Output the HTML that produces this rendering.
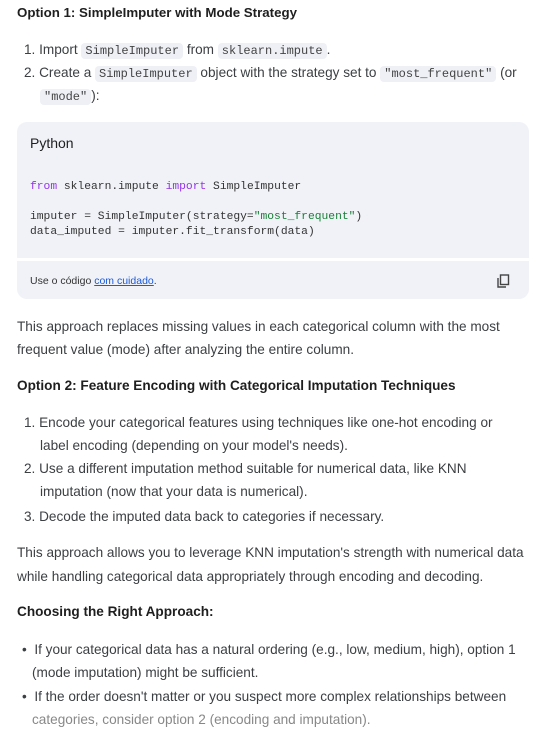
<!DOCTYPE html>
<html><head><style>
body{margin:0;width:535px;height:732px;background:#fff;font-family:"Liberation Sans",Arial,sans-serif;color:#1f1f1f;position:relative;overflow:hidden}
.l{position:absolute;left:17px;height:18px;line-height:18px;font-size:13.6px;white-space:nowrap;color:#3c4043}
.h{font-weight:bold;color:#1f1f1f}
code{font-family:"Liberation Mono",monospace;font-size:12px;background:#eef0f5;border-radius:4px;padding:1px 4px;color:#444}
.box{position:absolute;left:17px;width:512px;background:#f0f2f7}
.c{font-family:"Liberation Mono",monospace;font-size:11.3px;color:#333;position:absolute;left:30px;height:15px;line-height:15px;white-space:pre}
.k{color:#9334e6}.s{color:#188038}
</style></head><body>
<div class="l h" style="top:4px;font-size:13.3px">Option 1: SimpleImputer with Mode Strategy</div>
<div class="l" style="top:41px;left:24px">1. Import <code>SimpleImputer</code> from <code>sklearn.impute</code>.</div>
<div class="l" style="top:64px;left:24px">2. Create a <code>SimpleImputer</code> object with the strategy set to <code>"most_frequent"</code> (or</div>
<div class="l" style="top:87px;left:40px"><code>"mode"</code>):</div>
<div class="box" style="top:122px;height:136px;border-radius:10px 10px 0 0"></div>
<div class="box" style="top:261px;height:38px;border-radius:0 0 10px 10px"></div>
<div class="l" style="top:134px;left:30px;color:#1f1f1f;font-size:14px">Python</div>
<div class="c" style="top:180px"><span class="k">from</span> sklearn.impute <span class="k">import</span> SimpleImputer</div>
<div class="c" style="top:210px">imputer = SimpleImputer(strategy=<span class="s">"most_frequent"</span>)</div>
<div class="c" style="top:225px">data_imputed = imputer.fit_transform(data)</div>
<div class="l" style="top:272px;left:30px;font-size:10.5px;color:#333">Use o código <span style="color:#1a59d8;text-decoration:underline">com cuidado</span>.</div>
<svg style="position:absolute;left:497px;top:274px" width="13" height="14" viewBox="0 0 13 14"><rect x="3.5" y="1" width="8" height="9.5" fill="none" stroke="#444" stroke-width="1.4"/><path d="M1 4v9h8" fill="none" stroke="#444" stroke-width="1.4"/></svg>
<div class="l" style="top:318px">This approach replaces missing values in each categorical column with the most</div>
<div class="l" style="top:341px">frequent value (mode) after analyzing the entire column.</div>
<div class="l h" style="top:377px">Option 2: Feature Encoding with Categorical Imputation Techniques</div>
<div class="l" style="top:414px;left:24px">1. Encode your categorical features using techniques like one-hot encoding or</div>
<div class="l" style="top:437px;left:40px">label encoding (depending on your model's needs).</div>
<div class="l" style="top:460px;left:24px">2. Use a different imputation method suitable for numerical data, like KNN</div>
<div class="l" style="top:483px;left:40px">imputation (now that your data is numerical).</div>
<div class="l" style="top:508px;left:24px">3. Decode the imputed data back to categories if necessary.</div>
<div class="l" style="top:544px">This approach allows you to leverage KNN imputation's strength with numerical data</div>
<div class="l" style="top:568px">while handling categorical data appropriately through encoding and decoding.</div>
<div class="l h" style="top:603px">Choosing the Right Approach:</div>
<div class="l" style="top:641px;left:22px">•&nbsp;&nbsp;If your categorical data has a natural ordering (e.g., low, medium, high), option 1</div>
<div class="l" style="top:664px;left:32px">(mode imputation) might be sufficient.</div>
<div class="l" style="top:688px;left:22px">•&nbsp;&nbsp;If the order doesn't matter or you suspect more complex relationships between</div>
<div class="l" style="top:711px;left:32px;color:#888">categories, consider option 2 (encoding and imputation).</div>
</body></html>
